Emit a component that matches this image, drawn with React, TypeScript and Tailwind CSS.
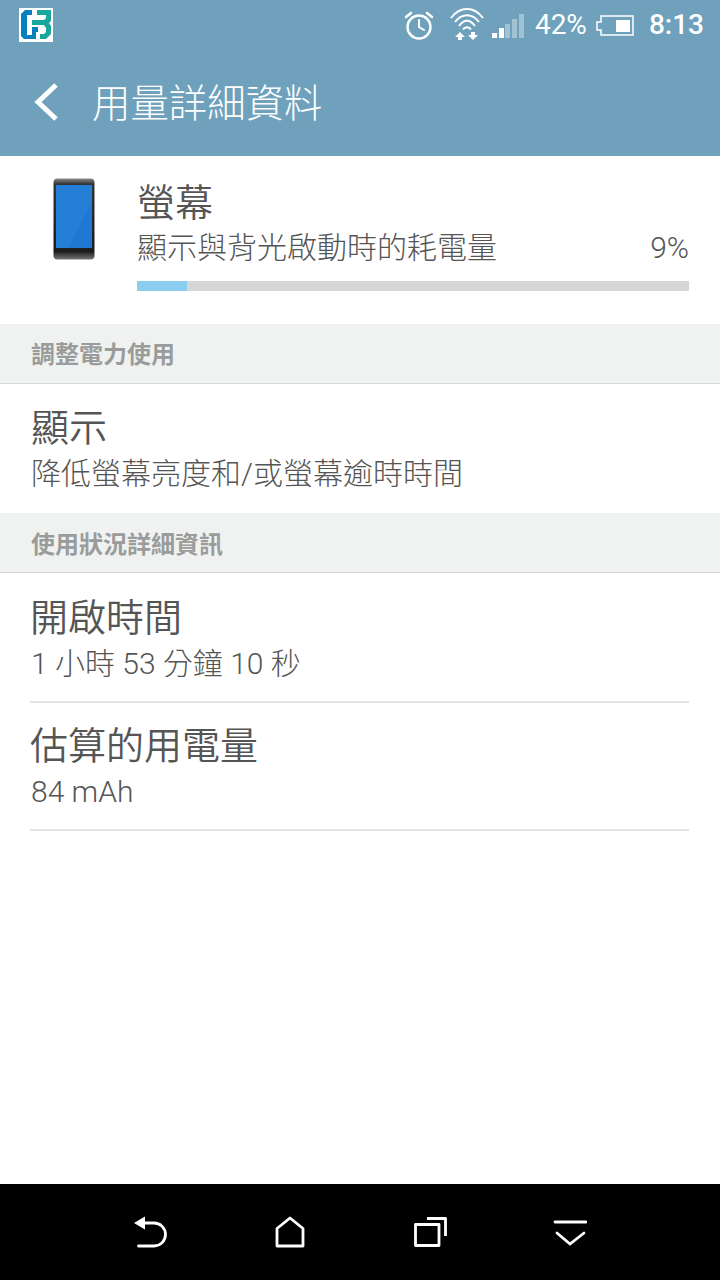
import React from "react";

const cjk = "font-['Roboto','Noto_Sans_CJK_TC',sans-serif]";

const Logo = () => (
  <div className="w-[34px] h-[34px] -mt-[1px] bg-white">
    <svg width="34" height="34" viewBox="0 0 34 34">
      <path d="M6 2H13V7H8V27H13V19H19V24H17V31H5L2 28V6Z" fill="#0a7fc0" />
      <path d="M18 2H32V13L30 15L32 18V26L27 31H21V26H25L27 24V20L25 17H13V12H25L27 10V7H18Z" fill="#17a79c" />
    </svg>
  </div>
);

const Alarm = () => (
  <svg width="32" height="32" viewBox="0 0 32 32" fill="none" stroke="white" strokeWidth="2.4" strokeLinecap="round">
    <circle cx="16" cy="18" r="11.5" />
    <path d="M16 11V18L21 21" strokeWidth="2" />
    <path d="M3 8L8 4M29 8L24 4" strokeWidth="2.6" />
  </svg>
);

const Wifi = () => (
  <svg width="34" height="34" viewBox="0 0 34 34" fill="none" stroke="white" strokeWidth="2">
    <path d="M1 10C10 -2 24 -2 33 10" />
    <path d="M5 14C12 5 22 5 29 14" />
    <path d="M9 18C14 11 20 11 25 18" />
    <path d="M13 21.500C15 18.500 19 18.500 21 21.500" />
    <path d="M10 24L15 29H12V32H8V29H5Z" fill="white" stroke="none" />
    <path d="M23 32L28 27H25V24H21V27H18Z" fill="white" stroke="none" />
  </svg>
);

const Signal = () => (
  <div className="flex items-end gap-[1.75px] h-[24px]">
    <div className="w-[5px] h-[5px] bg-white" />
    <div className="w-[5px] h-[10px] bg-white" />
    <div className="w-[5px] h-[14px] bg-white/35" />
    <div className="w-[5px] h-[19px] bg-white/35" />
    <div className="w-[5px] h-[24px] bg-white/35" />
  </div>
);

const Battery = () => (
  <svg width="38" height="21" viewBox="0 0 38 21" fill="none">
    <path d="M5 1H37V20H5V15H1V7H5Z" stroke="white" strokeWidth="1.500" />
    <rect x="20" y="5" width="14" height="12" fill="white" />
  </svg>
);

const Phone = () => (
  <svg width="42" height="83" viewBox="0 0 42 83">
    <defs>
      <linearGradient id="bezel" x1="0" y1="0" x2="0" y2="1">
        <stop offset="0" stopColor="#8a8a8a" />
        <stop offset="0.07" stopColor="#333" />
        <stop offset="0.9" stopColor="#1c1c1c" />
        <stop offset="1" stopColor="#777" />
      </linearGradient>
    </defs>
    <rect x="0.500" y="0.500" width="41" height="81" rx="4" fill="url(#bezel)" />
    <rect x="3" y="7" width="36" height="63" fill="#1f78d2" />
    <path d="M3 7H39V24L15 70H3Z" fill="#3a92e6" opacity="0.25" />
  </svg>
);

const SectionHeader = ({ title, className }: { title: string; className: string }) => (
  <div className={`h-[60px] shrink-0 bg-[#f0f2f1] border-b border-[#d8d8d8] flex items-center pl-[31px] text-[24px] font-bold text-[#9a9c9b] ${className}`}>
    {title}
  </div>
);

const App = () => {
  return (
    <div className={`w-[720px] h-[1280px] flex flex-col bg-white overflow-hidden ${cjk}`}>
      {/* Status bar and title */}
      <header className="h-[156px] bg-[#6fa1bc] flex flex-col text-white shrink-0">
        <div className="h-[50px] flex items-center pl-[19px] pr-[16px]">
          <Logo />
          <div className="ml-auto flex items-center">
            <Alarm />
            <div className="ml-[15px]"><Wifi /></div>
            <div className="ml-[8px] mt-[2px]"><Signal /></div>
            <span className="ml-[11px] text-[28px] leading-[50px]">42%</span>
            <div className="ml-[9px]"><Battery /></div>
            <span className="ml-[15px] text-[28px] leading-[50px] font-medium">8:13</span>
          </div>
        </div>
        <div className="flex-1 flex items-center pb-[2px]">
          <svg className="ml-[33px]" width="26" height="38" viewBox="0 0 26 38" fill="none" stroke="white" strokeWidth="5">
            <path d="M23 2L5 19L23 36" />
          </svg>
          <h1 className="ml-[33px] mt-[4px] text-[38.400px] leading-[52px] font-light">用量詳細資料</h1>
        </div>
      </header>

      {/* Battery usage */}
      <section className="h-[168px] flex shrink-0 pl-[53px] pr-[31px] pt-[22px]">
        <Phone />
        <div className="ml-[42px] flex-1">
          <div className="text-[38px] leading-[50px] font-[350] text-[#555]">螢幕</div>
          <div className="flex justify-between text-[30px] leading-[40px] text-[#555] font-light">
            <span>顯示與背光啟動時的耗電量</span>
            <span>9%</span>
          </div>
          <div className="mt-[13px] h-[10px] bg-[#d6d6d6]">
            <div className="w-[50px] h-full bg-[#8bcdee]" />
          </div>
        </div>
      </section>

      <SectionHeader title="調整電力使用" className="pt-[2px]" />

      <div className="h-[129px] pl-[31px] pt-[18px] shrink-0">
        <div className="text-[38px] leading-[52px] font-[350] text-[#555]">顯示</div>
        <div className="text-[30px] leading-[40px] text-[#555] font-light">降低螢幕亮度和/或螢幕逾時時間</div>
      </div>

      <SectionHeader title="使用狀況詳細資訊" className="pt-[4px]" />

      <main className="flex-1">
        <div className="h-[130px] ml-[30px] mr-[31px] pt-[19px] border-b-2 border-[#e3e3e3]">
          <div className="text-[38px] leading-[52px] font-[350] text-[#555]">開啟時間</div>
          <div className="pl-[1px] text-[30px] leading-[40px] text-[#555] font-light">1 小時 53 分鐘 10 秒</div>
        </div>
        <div className="h-[128px] ml-[30px] mr-[31px] pt-[17px] border-b-2 border-[#e3e3e3]">
          <div className="text-[38px] leading-[52px] font-[350] text-[#555]">估算的用電量</div>
          <div className="pl-[1px] text-[30px] leading-[40px] text-[#555] font-light">84 mAh</div>
        </div>
      </main>

      {/* Navigation bar */}
      <nav className="h-[96px] bg-black flex items-center justify-center shrink-0">
        <div className="w-[140px] flex justify-center">
          <svg width="36" height="34" viewBox="0 0 36 34" fill="none" stroke="white" strokeWidth="2.800" strokeLinecap="round">
            <path d="M12 8H22A11.500 11.500 0 0 1 22 31H6.500" />
            <path d="M13 1.500V14.500L2 8Z" fill="white" stroke="none" />
          </svg>
        </div>
        <div className="w-[140px] flex justify-center">
          <svg width="32" height="34" viewBox="0 0 32 34" fill="none" stroke="white" strokeWidth="2.800" strokeLinejoin="round">
            <path d="M16 3L29 13.500V31H3V13.500Z" />
          </svg>
        </div>
        <div className="w-[140px] flex justify-center">
          <svg width="36" height="34" viewBox="0 0 36 34" fill="none" stroke="white" strokeWidth="2.800" strokeLinejoin="round">
            <rect x="3.500" y="9.500" width="23.500" height="21" />
            <path d="M15 3.500H33.500V21" />
          </svg>
        </div>
        <div className="w-[140px] flex justify-center">
          <svg width="34" height="30" viewBox="0 0 34 30" fill="none" stroke="white" strokeWidth="2.800" strokeLinecap="round">
            <path d="M2 5H33" />
            <path d="M4 16L17 27L31 16" />
          </svg>
        </div>
      </nav>
    </div>
  );
};

export default App;
